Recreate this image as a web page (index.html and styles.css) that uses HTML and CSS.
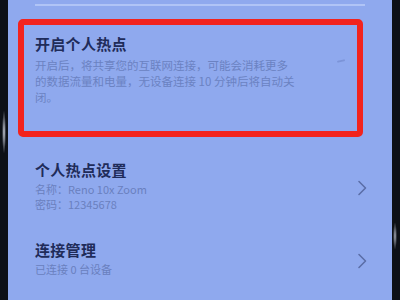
FILE: index.html
```html
<!DOCTYPE html>
<html>
<head>
<meta charset="utf-8">
<link rel="stylesheet" href="styles.css">
</head>
<body>
<div class="phone">
  <div class="bezel bezel-left"></div>
  <div class="screen">
    <div class="divider"></div>
    <section class="hotspot-card">
      <div class="card-text">
        <div class="item-title">开启个人热点</div>
        <div class="card-desc">开启后，将共享您的互联网连接，可能会消耗更多<br>的数据流量和电量，无设备连接 10 分钟后将自动关<br>闭。</div>
      </div>
      <span class="switch-mark"></span>
    </section>
    <div class="row row-settings">
      <div class="row-text">
        <div class="item-title">个人热点设置</div>
        <div class="row-sub">名称：Reno 10x Zoom</div>
        <div class="row-sub">密码：12345678</div>
      </div>
      <svg class="chevron" viewBox="0 0 10 16" width="10" height="16"><path d="M2 1.5 L8.5 8 L2 14.5" fill="none" stroke="#5b6ea8" stroke-width="1.6" stroke-linecap="round" stroke-linejoin="round"/></svg>
    </div>
    <div class="row row-manage">
      <div class="row-text">
        <div class="item-title">连接管理</div>
        <div class="row-sub">已连接 0 台设备</div>
      </div>
      <svg class="chevron" viewBox="0 0 10 16" width="10" height="16"><path d="M2 1.5 L8.5 8 L2 14.5" fill="none" stroke="#5b6ea8" stroke-width="1.6" stroke-linecap="round" stroke-linejoin="round"/></svg>
    </div>
  </div>
  <div class="bezel bezel-right"></div>
</div>
</body>
</html>
```
FILE: styles.css
```css
html, body {
  margin: 0;
  padding: 0;
  width: 400px;
  height: 300px;
  overflow: hidden;
}
body {
  font-family: "Noto Sans CJK SC", "Noto Sans", sans-serif;
}
.phone {
  display: flex;
  width: 400px;
  height: 300px;
}
.bezel {
  width: 8px;
  flex: none;
  background-color: #0d1016;
}
.bezel-left {
  background-image: radial-gradient(ellipse 2px 22px at 4px 132px, rgba(235,240,255,0.85), rgba(235,240,255,0) 100%);
}
.bezel-right {
  background-image: radial-gradient(ellipse 2px 14px at 3px 236px, rgba(235,240,255,0.7), rgba(235,240,255,0) 100%);
}
.screen {
  flex: 1;
  background: #8fa9ee;
  display: flex;
  flex-direction: column;
}
.divider {
  height: 2px;
  margin: 4px 27px 0 27px;
  background: rgba(190, 208, 250, 0.7);
}
.hotspot-card {
  margin: 13px 29px 0 10px;
  border: 6px solid #f2231e;
  border-radius: 5px;
  padding: 9px 12px 26px 11px;
  display: flex;
  align-items: flex-start;
  justify-content: space-between;
}
.item-title {
  font-size: 15px;
  line-height: 20px;
  font-weight: 700;
  color: #1f2c5a;
  letter-spacing: 0.3px;
}
.card-desc {
  margin-top: 3px;
  font-size: 11.5px;
  line-height: 16px;
  color: #6b82c2;
  white-space: nowrap;
}
.switch-mark {
  margin-top: 26px;
  width: 8px;
  height: 2px;
  border-radius: 1px;
  background: rgba(90, 110, 175, 0.35);
  transform: rotate(-12deg);
}
.row {
  display: flex;
  align-items: center;
  justify-content: space-between;
  padding: 0 25px 0 27px;
}
.row-settings {
  margin-top: 23px;
}
.row-manage {
  margin-top: 28px;
}
.row-text .item-title {
  margin-bottom: 2px;
}
.row-sub {
  font-size: 11px;
  line-height: 15px;
  color: #6a80be;
}
.chevron {
  display: block;
  margin-top: 4px;
}
```
